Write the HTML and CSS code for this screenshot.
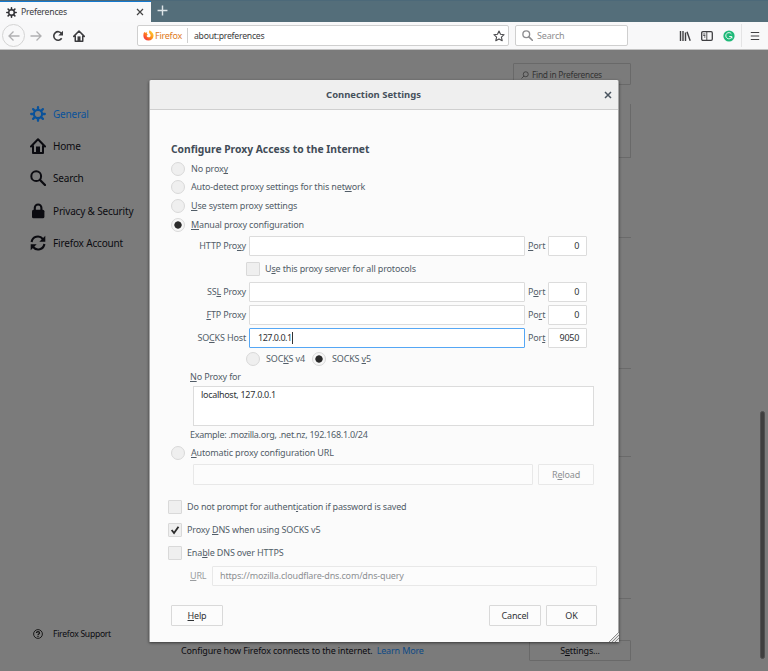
FILE: index.html
```html
<!DOCTYPE html>
<html lang="en">
<head>
<meta charset="utf-8">
<title>Preferences</title>
<link rel="stylesheet" href="styles.css">
</head>
<body>
<svg class="defs" width="0" height="0">
  <symbol id="gear" viewBox="0 0 16 16"><g fill="none" stroke="currentColor"><circle cx="8" cy="8" r="4.1" stroke-width="2.1"/><path stroke-width="2.3" stroke-linecap="round" d="M8 1.200v2.300M8 12.500v2.300M1.200 8h2.300M12.500 8h2.300M3.100 3.100l1.600 1.600M11.300 11.300l1.600 1.600M3.100 12.900l1.600-1.600M11.300 4.700l1.600-1.600"/></g></symbol>
  <symbol id="home" viewBox="0 0 16 16"><path fill="none" stroke="currentColor" stroke-width="2" stroke-linejoin="round" stroke-linecap="round" d="M1 8.500L8 1.300l7 7.200M3 7.500V15h10V7.500"/><path fill="currentColor" d="M6 8.500h4V15H6z"/></symbol>
  <symbol id="search" viewBox="0 0 16 16"><g fill="none" stroke="currentColor" stroke-linecap="round"><circle cx="6.200" cy="6.200" r="4.900" stroke-width="2"/><path stroke-width="2.300" d="M10 10l5 5"/></g></symbol>
  <symbol id="find" viewBox="0 0 16 16"><g fill="none" stroke="currentColor" stroke-width="1.500"><circle cx="9.500" cy="6.500" r="5"/><path d="M6 10l-5 5"/></g></symbol>
</svg>

<header class="tabs">
  <div class="tab">
    <svg class="tab-icon"><use href="#gear"/></svg>
    <span class="tab-title">Preferences</span>
    <svg class="tab-close" viewBox="0 0 8 8"><path d="M1 1l6 6M7 1L1 7" stroke="#444" stroke-width="1.200"/></svg>
  </div>
  <svg class="tab-new" viewBox="0 0 10 10"><path d="M5 0.500v9M0.500 5h9" stroke="#dde4e7" stroke-width="1.300"/></svg>
</header>

<nav class="toolbar">
  <span class="back"><svg viewBox="0 0 12 12"><path d="M11.500 6H1M5.500 1.500L1 6l4.500 4.500"/></svg></span>
  <svg class="forward" viewBox="0 0 12 12"><path d="M0.500 6H11M6.500 1.500L11 6l-4.500 4.500"/></svg>
  <svg class="reload" viewBox="0 0 12 12"><path d="M9.700 8.300A4.300 4.300 0 1 1 9.600 3.500" fill="none" stroke="#3c3c3f" stroke-width="1.600"/><path d="M11 .8v4.700H6.300z" fill="#3c3c3f"/></svg>
  <svg class="home"><use href="#home"/></svg>
  <div class="urlbar">
    <svg class="fox" viewBox="0 0 12 12"><defs><linearGradient id="flame" x1="1" y1="0" x2="0" y2="1"><stop offset="0" stop-color="#ffe13c"/><stop offset=".5" stop-color="#ff8a16"/><stop offset="1" stop-color="#f4154f"/></linearGradient></defs><path fill="url(#flame)" d="M1.300 2.200L2.600 3 4.500 2.500 4.200 4 5.300 5.200 4 6.200C4.400 8 6.900 8.600 8.100 7 9 5.500 7.600 4.200 7 3.500 6.300 2.500 6.500 1.200 7.200.4 8.500 1 9 1.700 9.700 2.400 11 3.500 11.700 5 11.500 6.600A5.600 5.600 0 0 1 .4 6.500C.3 4.800.6 3.300 1.300 2.200z"/></svg>
    <span class="identity">Firefox</span>
    <span class="address">about:preferences</span>
    <svg class="star" viewBox="0 0 12 12"><path d="M6 1l1.500 3.300 3.600.4-2.700 2.400.8 3.600L6 8.900l-3.200 1.800.8-3.600L.9 4.700l3.600-.4z"/></svg>
  </div>
  <div class="searchbar"><svg><use href="#search"/></svg><span>Search</span></div>
  <svg class="library" viewBox="0 0 12 12"><path d="M1.500 1v10M4 1v10M6.500 2.500V11M8 1.800l3.200 9" fill="none" stroke="#3f3f42" stroke-width="1.400"/></svg>
  <svg class="sidebar-btn" viewBox="0 0 12 12"><rect x=".7" y="1.700" width="10.600" height="8.600" rx="1.200" fill="none" stroke="#3f3f42" stroke-width="1.300"/><path d="M5.800 2v8M2.200 4h2.200M2.200 5.500h2.200M3 7h1.400" stroke="#3f3f42" stroke-width=".9"/></svg>
  <span class="grammar"><svg viewBox="0 0 12 12"><circle cx="6" cy="6" r="5.600" fill="#1eb978"/><path d="M8.400 3.900A3.100 3.100 0 1 0 8.700 7M6.200 6.500h2.700v2" fill="none" stroke="#fff" stroke-width=".9"/></svg></span>
  <svg class="menu" viewBox="0 0 10 10"><path d="M.8 1.500h8.400M.8 5h8.400M.8 8.500h8.400" stroke="#3f3f42" stroke-width="1.200"/></svg>
</nav>

<main class="page">
  <aside class="categories">
    <div class="category selected"><svg><use href="#gear"/></svg>General</div>
    <div class="category"><svg><use href="#home"/></svg>Home</div>
    <div class="category"><svg><use href="#search"/></svg>Search</div>
    <div class="category"><svg viewBox="0 0 16 16"><rect x="2" y="6.800" width="12.400" height="8.500" rx="1.500"/><path d="M4.800 8V4.800a3.300 3.300 0 0 1 6.600 0V8" fill="none" stroke="currentColor" stroke-width="2.100"/></svg>Privacy &amp; Security</div>
    <div class="category"><svg viewBox="0 0 16 16"><path d="M1.600 7A6.300 6.300 0 0 1 12.800 4M14.400 9A6.300 6.300 0 0 1 3.200 12" fill="none" stroke="currentColor" stroke-width="2.100"/><path d="M15.300.8v6H9.300zM.7 15.200v-6h6z"/></svg>Firefox Account</div>
    <div class="support"><svg viewBox="0 0 10 10"><circle cx="5" cy="5" r="4.400" fill="none" stroke="#111" stroke-width=".9"/><path d="M3.500 4.100C3.500 2 6.500 2.200 6.500 3.900 6.500 5 5 4.900 5 6M5 6.700v1.200" fill="none" stroke="#111" stroke-width="1.200"/></svg>Firefox Support</div>
  </aside>
  <section class="prefs">
    <div class="find"><svg><use href="#find"/></svg>Find in Preferences</div>
    <div class="panel"></div>
    <div class="rule r1"></div>
    <div class="rule r2"></div>
    <div class="rule r3"></div>
    <div class="rule r4"></div>
    <div class="network">
      <span class="network-text">Configure how Firefox connects to the internet.</span><a class="learn">Learn More</a>
      <span class="settings">S<u>e</u>ttings...</span>
    </div>
  </section>
  <div class="scrollbar"></div>
</main>

<div class="dialog">
  <div class="dialog-head"><span>Connection Settings</span>
    <svg class="dialog-close" viewBox="0 0 8 8"><path d="M1 1l6 6M7 1L1 7" stroke="#4a5560" stroke-width="1.500"/></svg></div>
  <div class="dialog-body">
    <h1>Configure Proxy Access to the Internet</h1>
    <div class="option h18"><i class="radio"></i><span>No prox<u>y</u></span></div>
    <div class="option h18"><i class="radio"></i><span>Auto-detect proxy settings for this net<u>w</u>ork</span></div>
    <div class="option h20"><i class="radio"></i><span><u>U</u>se system proxy settings</span></div>
    <div class="option h18"><i class="radio on"></i><span><u>M</u>anual proxy configuration</span></div>

    <div class="proxy http"><label>HTTP Pro<u>x</u>y</label><div class="field"></div><label class="port"><u>P</u>ort</label><div class="field num">0</div></div>
    <div class="option share"><i class="check"></i><span>U<u>s</u>e this proxy server for all protocols</span></div>
    <div class="proxy"><label>SS<u>L</u> Proxy</label><div class="field"></div><label class="port">P<u>o</u>rt</label><div class="field num">0</div></div>
    <div class="proxy"><label><u>F</u>TP Proxy</label><div class="field"></div><label class="port">Po<u>r</u>t</label><div class="field num">0</div></div>
    <div class="proxy last"><label>SO<u>C</u>KS Host</label><div class="field focus">127.0.0.1<b class="caret"></b></div><label class="port">Por<u>t</u></label><div class="field num">9050</div></div>
    <div class="option version"><i class="radio"></i><span class="v4">SOC<u>K</u>S v4</span><i class="radio on"></i><span>SOCKS <u>v</u>5</span></div>

    <div class="noproxy-label"><u>N</u>o Proxy for</div>
    <div class="noproxy">localhost, 127.0.0.1</div>
    <div class="example">Example: .mozilla.org, .net.nz, 192.168.1.0/24</div>
    <div class="option auto"><i class="radio"></i><span><u>A</u>utomatic proxy configuration URL</span></div>
    <div class="autourl"><div class="field disabled"></div><span class="button disabled">R<u>e</u>load</span></div>

    <div class="checks">
      <div class="option"><i class="check"></i><span>Do not prompt for authent<u>i</u>cation if password is saved</span></div>
      <div class="option"><i class="check"><svg viewBox="0 0 10 10"><path d="M2.200 5l2 2.500L7.900 2.300" fill="none" stroke="#2b2b2b" stroke-width="1.500"/></svg></i><span>Proxy <u>D</u>NS when using SOCKS v5</span></div>
      <div class="option"><i class="check"></i><span>Ena<u>b</u>le DNS over HTTPS</span></div>
    </div>
    <div class="doh"><label><u>U</u>RL</label><div class="field disabled">https://mozilla.cloudflare-dns.com/dns-query</div></div>
    <div class="buttons"><span class="button help"><u>H</u>elp</span><span class="button cancel">Cancel</span><span class="button ok">OK</span></div>
  </div>
  <svg class="grip" viewBox="0 0 10 10"><path d="M0 10L10 0v10z" fill="#e4e4e4"/><path d="M0 10L10 0M3 10l7-7M6 10l4-4" stroke="#8b8b8b" stroke-width="1"/></svg>
</div>
</body>
</html>
```

FILE: styles.css
```css
* { box-sizing: border-box; }
body {
  margin: 0;
  width: 768px;
  height: 671px;
  overflow: hidden;
  position: relative;
  font: 9px/14px "Noto Sans", sans-serif;
  letter-spacing: -0.16px;
  white-space: nowrap;
  color: #525d68;
  background: #7b7b7b;
}
svg { display: block; flex: none; }
.defs { position: absolute; }
u { text-decoration: underline; text-decoration-thickness: 1px; text-underline-offset: 1px; text-decoration-skip-ink: none; }

/* Tab strip */
.tabs { display: flex; height: 22px; background: #546e7a; border-top: 1px solid #4c6979; }
.tab { display: flex; align-items: center; width: 151px; height: 21px; padding: 0 7px 0 6px; background: #f9f9fa; border-top: 1px solid #1479cf; color: #3c3c40; }
.tab-icon { width: 11px; height: 11px; color: #2f2f33; }
.tab-title { margin-left: 4px; flex: 1; font-size: 8.7px; letter-spacing: -0.22px; }
.tab-close { width: 8px; height: 8px; }
.tab-new { width: 11px; height: 11px; margin: 4px 0 0 6px; }

/* Navigation toolbar */
.toolbar { display: flex; align-items: center; height: 28px; padding-left: 2px; background: #f8f8f9; border-bottom: 1px solid #c4c4c4; color: #3c3c3f; }
.back { display: flex; align-items: center; justify-content: center; width: 23px; height: 23px; border: 1px solid #d4d4d4; border-radius: 50%; }
.back svg, .forward { width: 12px; height: 12px; fill: none; stroke: #b0b0b2; stroke-width: 1.3; }
.forward { margin-left: 5px; }
.reload { width: 12px; height: 12px; margin-left: 10px; }
.home { width: 12px; height: 12px; margin-left: 9px; }
.urlbar { display: flex; align-items: center; width: 372px; height: 21px; margin-left: 52px; padding: 0 3px 0 5px; background: #fff; border: 1px solid #cfcfcf; border-radius: 2px; }
.fox { width: 11px; height: 11px; }
.identity { width: 33px; height: 15px; margin-left: 1px; line-height: 15px; color: #e07b1c; border-right: 1px solid #d0d0d0; letter-spacing: -0.25px; }
.address { flex: 1; padding-left: 6px; color: #3c3c40; font-size: 8.7px; letter-spacing: -0.26px; }
.star { width: 12px; height: 12px; fill: none; stroke: #4b4b4e; stroke-width: 1.1; stroke-linejoin: round; }
.searchbar { display: flex; align-items: center; width: 113px; height: 21px; margin-left: 6px; padding-left: 6px; background: #fff; border: 1px solid #cfcfcf; border-radius: 2px; color: #8d8d90; }
.searchbar svg { width: 11px; height: 11px; margin-right: 4px; color: #8d8d90; }
.library { width: 12px; height: 12px; margin-left: 51px; }
.sidebar-btn { width: 12px; height: 12px; margin-left: 10px; }
.grammar { display: flex; align-items: center; width: 20px; height: 23px; margin-left: 9px; padding-left: 1px; border-right: 1px solid #e4e4e5; }
.grammar svg { width: 12px; height: 12px; }
.menu { width: 10px; height: 10px; margin-left: 8px; }

/* Page behind the dialog */
.page { display: flex; position: relative; height: 621px; background: #7b7b7b; color: #0b0b10; }
.categories { width: 160px; padding: 47.500px 0 0 30px; }
.category { display: flex; align-items: center; height: 32.400px; gap: 7px; font-size: 10px; letter-spacing: -0.17px; }
.category svg { width: 16px; height: 16px; fill: currentColor; }
.selected { color: #0a529a; }
.support { display: flex; align-items: center; gap: 10px; margin-top: 367.500px; padding-left: 3px; height: 14px; font-size: 8.6px; letter-spacing: -0.28px; }
.support svg { width: 10px; height: 10px; }
.prefs { width: 471px; padding: 13px 0 0 21px; display: flex; flex-direction: column; }
.find { display: flex; align-items: center; gap: 3px; align-self: flex-end; width: 118px; height: 22px; padding: 1px 0 0 7px; border: 1px solid #696969; border-radius: 1px; font-size: 8.400px; letter-spacing: -0.28px; color: #333; }
.find svg { width: 8px; height: 8px; }
.panel { height: 54px; margin-top: 19px; border: 1px solid #696969; border-top: 0; }
.rule { border-top: 1px solid #6a6a6a; }
.r1 { margin-top: 79px; }
.r2 { margin-top: 130px; }
.r3 { margin-top: 87px; }
.r4 { margin-top: 141px; }
.network { display: flex; align-items: center; margin-top: 41px; height: 21px; }
.learn { flex: 1; margin-left: 4px; color: #0e4a85; }
.settings { width: 102px; height: 21px; line-height: 19px; text-align: center; border: 1px solid #696969; border-radius: 1px; }
.scrollbar { position: absolute; right: 3px; top: 361px; width: 5px; height: 248px; border-radius: 3px; background: #3f3f3f; border: 0.500px solid #505050; }

/* Modal dialog */
.dialog { position: absolute; left: 149px; top: 80px; width: 470px; height: 562px; background: #fbfbfb; border: solid #a7a7a7; border-width: 0 1px; border-radius: 2px 2px 1px 1px; box-shadow: 0 1px 3px rgba(0,0,0,.55); }
.dialog-head { display: flex; align-items: center; height: 30px; padding: 0 6px 0 0; background: #efefef; border-bottom: 1px solid #cfcfcf; border-radius: 2px 2px 0 0; color: #46515c; font-weight: 700; font-size: 9.45px; letter-spacing: 0; }
.dialog-head span { flex: 1; text-align: center; padding-right: 7px; }
.dialog-close { width: 8px; height: 8px; }
.dialog-body { padding: 30px 21px 0; }
h1 { margin: 0; height: 20px; font-size: 10.300px; line-height: 19px; letter-spacing: 0; color: #414c57; }
.option { display: flex; align-items: center; height: 23px; }
.h18 { height: 18px; }
.h20 { height: 20px; }
.radio, .check { flex: none; width: 14px; height: 14px; margin-right: 6px; background: #efefef; border: 1px solid #d9d9d9; border-radius: 50%; }
.radio.on { background: radial-gradient(circle, #2b2b2b 3.300px, #f6f6f6 4px); }
.check { border-radius: 1px; margin-right: 5px; }
.check svg { width: 12px; height: 12px; }
.proxy { display: flex; align-items: center; height: 20px; margin-bottom: 3px; }
.proxy label { flex: none; width: 75px; margin-right: 3px; text-align: right; }
.proxy label.port { width: 17px; text-align: left; margin-left: 3px; margin-right: 3px; }
.field { flex: none; width: 276px; height: 20px; line-height: 18px; padding: 0 8px; border: 1px solid #dcdcdc; border-radius: 1px; background: #fff; color: #303336; }
.field.num { width: 39px; padding: 0 7px; text-align: right; letter-spacing: -0.3px; }
.http { height: 21px; margin: 1px 0 0; }
.last { margin-bottom: 0; }
.field.focus { display: flex; align-items: center; border-color: #55a7f5; letter-spacing: -0.5px; }
.caret { width: 1px; height: 12px; background: #333; }
.share { height: 26px; padding-left: 75px; }
.version { height: 22px; padding-left: 75px; }
.v4 { width: 41px; margin-right: 5px; }
.noproxy-label { height: 14px; padding-left: 19px; }
.noproxy { width: 401px; height: 40px; margin: 2px 0 0 22px; padding: 1px 7px; border: 1px solid #dcdcdc; background: #fff; color: #303336; letter-spacing: -0.3px; }
.example { height: 18px; line-height: 18px; padding-left: 19px; letter-spacing: -0.28px; }
.auto { height: 17px; }
.autourl { display: flex; gap: 5px; margin: 3px 0 0 22px; height: 21px; }
.autourl .field { width: 340px; height: 21px; }
.button { height: 21px; line-height: 19px; text-align: center; border: 1px solid #d9d9d9; border-radius: 1px; background: #fcfcfc; color: #303336; }
.autourl .button { width: 56px; }
.field.disabled, .button.disabled { border-color: #e8e8e8; background: #fcfcfc; color: #8d9093; }
.checks { margin: 10px 0 0 -3px; }
.doh { display: flex; align-items: center; margin-top: 2px; padding-left: 19px; }
.doh label { width: 22px; color: #9a9da0; }
.doh .field { width: 385px; padding: 0 7px; }
.buttons { display: flex; margin-top: 19px; }
.help { width: 52px; }
.cancel { width: 52px; margin-left: 266px; }
.ok { width: 51px; margin-left: 5px; }
.grip { position: absolute; right: -1px; bottom: 0; width: 10px; height: 10px; }
```
